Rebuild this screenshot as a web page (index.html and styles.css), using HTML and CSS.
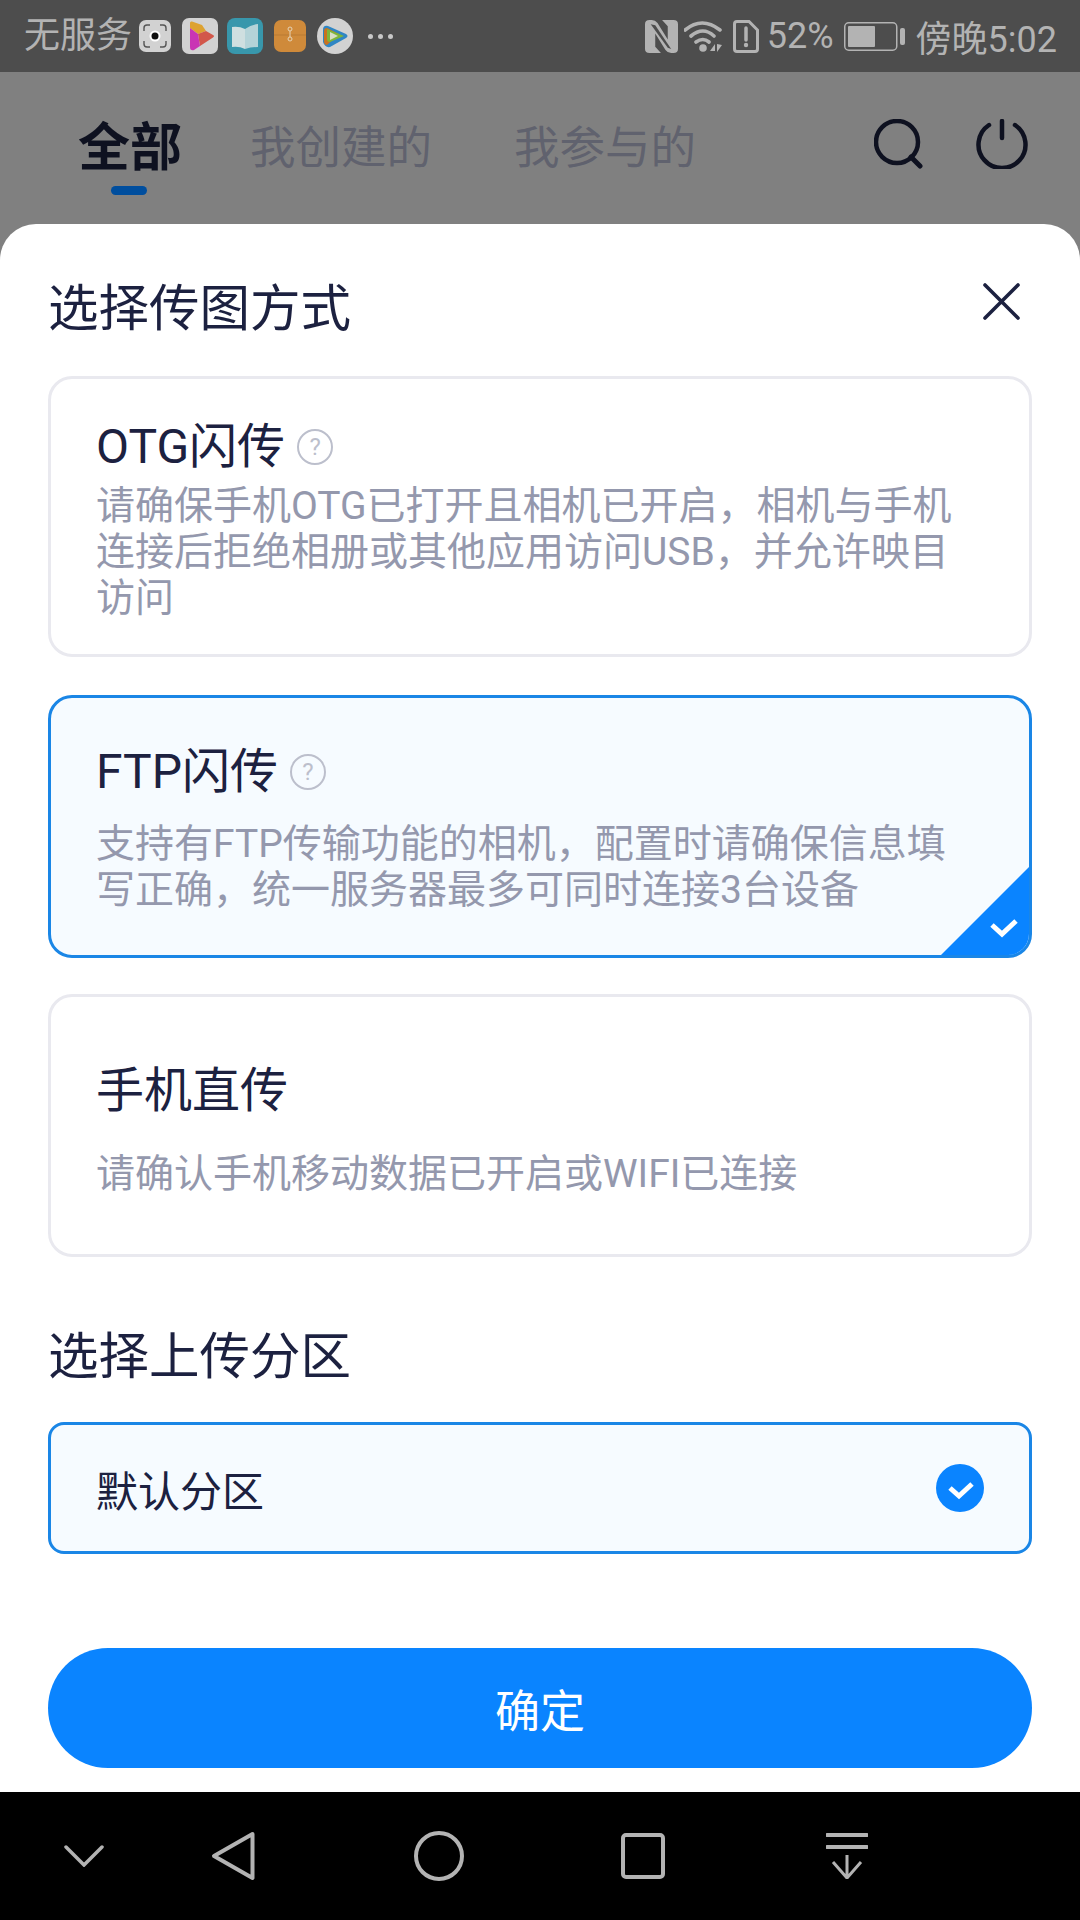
FILE: index.html
```html
<!DOCTYPE html>
<html lang="zh">
<head>
    <meta charset="UTF-8" />
    <title>选择传图方式</title>
    <meta name="viewport" content="width=device-width, initial-scale=1" />
    <link rel="stylesheet" href="styles.css">
</head>
<body>
    <div class="status">
        <div class="status-left">
            <span class="carrier">无服务</span>
            <svg class="ico-shot" width="32" height="32" viewBox="0 0 32 32">
                <rect width="32" height="32" rx="7" fill="#d2d2d2"/>
                <path d="M5 11V8q0-3 3-3h3M21 5h3q3 0 3 3v3M27 21v3q0 3-3 3h-3M11 27H8q-3 0-3-3v-3" fill="none" stroke="#555" stroke-width="1.4"/>
                <circle cx="16" cy="16" r="5.5" fill="#fff"/>
                <circle cx="16" cy="16" r="3.5" fill="#111"/>
            </svg>
            <svg class="ico-play" width="36" height="36" viewBox="0 0 36 36">
                <rect width="36" height="36" rx="7" fill="#d2d2d2"/>
                <path d="M8 5q0-2 2-1.500L20 7l4 6-8 3-8-6z" fill="#dda231"/>
                <path d="M16 16l8-3 7 4q2 1 0 2.500L18 28z" fill="#d2574a"/>
                <path d="M8 10l8 6 2 12-6 4q-4 1-4-3z" fill="#c935b4"/>
            </svg>
            <svg class="ico-book" width="36" height="36" viewBox="0 0 36 36">
                <rect width="36" height="36" rx="8" fill="#3897ac"/>
                <path d="M5 9q7-1 13 2v20q-6-3-13-2z" fill="#cfdfe0"/>
                <path d="M18 11q6-4 13-5v23q-7 0-13 2z" fill="#b4d3d8"/>
            </svg>
            <svg class="ico-zip" width="32" height="32" viewBox="0 0 32 32">
                <rect width="32" height="32" rx="7" fill="#cf8a3a"/>
                <path d="M0 15h32" stroke="#b97a32" stroke-width="1"/>
                <circle cx="16" cy="9" r="2" fill="none" stroke="#e6d2b4" stroke-width="1"/>
                <circle cx="16" cy="19" r="2" fill="none" stroke="#e6d2b4" stroke-width="1"/>
                <path d="M16 11v6" stroke="#e6d2b4" stroke-width="1"/>
            </svg>
            <svg class="ico-video" width="36" height="36" viewBox="0 0 36 36">
                <circle cx="18" cy="18" r="18" fill="#d2d2d2"/>
                <path d="M6 12q0-5 5-4l18 8q3 2 0 4L13 29q-5 1-7-5z" fill="#2f86c4"/>
                <path d="M7 13q0-3 3-3l12 6-12 11q-3 0-3-4z" fill="#c9711f"/>
                <path d="M10 11l17 7-14 6q-3 0-3-3z" fill="#7eb53a"/>
                <path d="M13 14l8 4-8 4z" fill="#d8dfc4"/>
            </svg>
            <span class="dots"><i></i><i></i><i></i></span>
        </div>
        <div class="status-right">
            <svg width="33" height="33" viewBox="0 0 29 32" preserveAspectRatio="none">
                <path d="M0 4q0-4 4-4h2q3 0 5 3l9 16V6l-5-6h10q4 0 4 4v24q0 4-4 4h-2q-3 0-5-3L9 13v13l5 6H4q-4 0-4-4z" fill="#b3b3b3"/>
                <path d="M5 4l4 1 14 23-3-1z" fill="#4d4d4d"/>
            </svg>
            <svg class="ico-wifi" width="39" height="34" viewBox="0 0 39 34">
                <path d="M1 11q17-14 35 0M7 17q12-10 23 0M12 23q7-5 13 0" fill="none" stroke="#b3b3b3" stroke-width="3.600" stroke-linecap="round"/>
                <circle cx="19" cy="29" r="3.800" fill="#b3b3b3"/>
                <path d="M26 32l5-7v7zM33 25l5 1-5 7z" fill="#b3b3b3"/>
            </svg>
            <svg class="ico-sim" width="26" height="33" viewBox="0 0 26 33">
                <path d="M4 1.500h12l8.500 8.500v19q0 2.500-2.500 2.500H4q-2.500 0-2.500-2.500V4q0-2.500 2.500-2.500z" fill="none" stroke="#b3b3b3" stroke-width="3"/>
                <path d="M13 8v12" stroke="#b3b3b3" stroke-width="3.500" stroke-linecap="round"/>
                <circle cx="13" cy="25" r="2.200" fill="#b3b3b3"/>
            </svg>
            <span class="battery-pct">52%</span>
            <svg class="ico-battery" width="61" height="29" viewBox="0 0 61 29">
                <rect x="0.750" y="0.750" width="52" height="27.500" rx="4" fill="none" stroke="#b3b3b3" stroke-width="1.500"/>
                <rect x="4" y="4" width="27" height="21" rx="1" fill="#b3b3b3"/>
                <rect x="56" y="6" width="5" height="17" rx="2" fill="#b3b3b3"/>
            </svg>
            <span class="clock">傍晚5:02</span>
        </div>
    </div>

    <div class="tabs">
        <div class="tab tab-active">全部</div>
        <div class="tab">我创建的</div>
        <div class="tab">我参与的</div>
        <svg class="ico-search" width="50" height="50" viewBox="0 0 50 50">
            <circle cx="23" cy="23" r="21" fill="none" stroke="#0e1120" stroke-width="4.500"/>
            <path d="M37 38l9 9" stroke="#0e1120" stroke-width="5" stroke-linecap="round"/>
        </svg>
        <svg class="ico-power" width="52" height="50" viewBox="0 0 52 50">
            <path d="M13 6a23.500 23.500 0 1 0 26 0" fill="none" stroke="#0e1120" stroke-width="4.500" stroke-linecap="round"/>
            <path d="M26 2v17" stroke="#0e1120" stroke-width="4.500" stroke-linecap="round"/>
        </svg>
    </div>

    <div class="sheet">
        <div class="sheet-head">
            <h2>选择传图方式</h2>
            <svg class="ico-close" width="37" height="37" viewBox="0 0 37 37">
                <path d="M2 2l33 33M35 2L2 35" stroke="#1c2140" stroke-width="3.600" stroke-linecap="round"/>
            </svg>
        </div>

        <div class="option">
            <div class="option-title">OTG闪传 <span class="help">?</span></div>
            <p>请确保手机OTG已打开且相机已开启，相机与手机<br>连接后拒绝相册或其他应用访问USB，并允许映目<br>访问</p>
        </div>

        <div class="option option-selected">
            <div class="option-title">FTP闪传 <span class="help">?</span></div>
            <p>支持有FTP传输功能的相机，配置时请确保信息填<br>写正确，统一服务器最多可同时连接3台设备</p>
            <svg class="corner" width="88" height="88" viewBox="0 0 88 88">
                <path d="M88 0V88H0z" fill="#0a84ff"/>
                <path d="M51 58l10 9 14-13" fill="none" stroke="#fff" stroke-width="5"/>
            </svg>
        </div>

        <div class="option option-plain">
            <div class="option-title">手机直传</div>
            <p>请确认手机移动数据已开启或WIFI已连接</p>
        </div>

        <h2 class="section-title">选择上传分区</h2>

        <div class="partition">
            <span>默认分区</span>
            <svg width="48" height="48" viewBox="0 0 48 48">
                <circle cx="24" cy="24" r="24" fill="#0a84ff"/>
                <path d="M14 24l9 8 13-12" fill="none" stroke="#fff" stroke-width="5"/>
            </svg>
        </div>

        <button class="confirm">确定</button>
    </div>

    <div class="nav">
        <svg class="nav-down" width="40" height="22" viewBox="0 0 40 22">
            <path d="M2 2l18 18L38 2" fill="none" stroke="#b3b3b3" stroke-width="3.500" stroke-linecap="round"/>
        </svg>
        <svg class="nav-back" width="44" height="50" viewBox="0 0 44 50">
            <path d="M41.500 3L3 25l38.500 22z" fill="none" stroke="#b3b3b3" stroke-width="4" stroke-linejoin="round"/>
        </svg>
        <svg class="nav-home" width="50" height="50" viewBox="0 0 50 50">
            <circle cx="25" cy="25" r="23" fill="none" stroke="#b3b3b3" stroke-width="4"/>
        </svg>
        <svg class="nav-recent" width="44" height="46" viewBox="0 0 44 46">
            <rect x="2" y="2" width="40" height="42" rx="3" fill="none" stroke="#b3b3b3" stroke-width="4"/>
        </svg>
        <svg class="nav-pull" width="42" height="46" viewBox="0 0 42 46">
            <path d="M1 2h40M1 14h40" stroke="#b3b3b3" stroke-width="4" stroke-linecap="round"/>
            <path d="M21 22v22M7 29l14 16 14-16" fill="none" stroke="#b3b3b3" stroke-width="3"/>
        </svg>
    </div>
</body>
</html>
```

FILE: styles.css
```css
body {
    font-family: Roboto, "Noto Sans CJK SC", sans-serif;
    margin: 0;
    padding: 0;
    width: 1080px;
    height: 1920px;
    overflow: hidden;
    display: flex;
    flex-direction: column;
    background: #808080;
}
svg {
    display: block;
    flex: none;
}

/* status bar */
.status {
    height: 72px;
    flex: none;
    background: #4d4d4d;
    color: #b3b3b3;
    display: flex;
    justify-content: space-between;
    align-items: center;
    padding: 0 23px 0 24px;
}
.status-left, .status-right {
    display: flex;
    align-items: center;
}
.carrier {
    font-size: 36px;
    line-height: 72px;
    width: 115px;
}
.ico-play { margin-left: 11px; }
.ico-book { margin-left: 9px; }
.ico-zip { margin-left: 11px; }
.ico-video { margin-left: 11px; }
.dots {
    display: flex;
    gap: 5px;
    margin-left: 15px;
}
.dots i {
    width: 5px;
    height: 5px;
    border-radius: 50%;
    background: #c8c8c8;
}
.ico-wifi { margin-left: 6px; }
.ico-sim { margin-left: 10px; }
.battery-pct {
    font-size: 36px;
    margin-left: 8px;
}
.ico-battery { margin-left: 10px; }
.clock {
    font-size: 36px;
    margin-left: 11px;
}

/* tabs behind the sheet */
.tabs {
    height: 152px;
    flex: none;
    display: flex;
    align-items: flex-start;
    padding: 45px 52px 0 78px;
    box-sizing: border-box;
}
.tab {
    font-size: 45.500px;
    line-height: 64px;
    color: #60626e;
    margin-right: 82px;
}
.tab-active {
    font-size: 52px;
    font-weight: 700;
    color: #0e1120;
    margin-right: 68px;
    position: relative;
}
.tab-active::after {
    content: "";
    position: absolute;
    left: 33px;
    top: 69px;
    width: 36px;
    height: 9px;
    border-radius: 5px;
    background: #004e9e;
}
.ico-search {
    margin: 2px 0 0 auto;
}
.ico-power {
    margin: 2px 0 0 52px;
}

/* bottom sheet */
.sheet {
    flex: 1;
    min-height: 0;
    background: #fff;
    border-radius: 36px 36px 0 0;
    padding: 0 48px;
    display: flex;
    flex-direction: column;
}
.sheet-head {
    display: flex;
    justify-content: space-between;
    align-items: flex-start;
    height: 152px;
}
h2 {
    font-size: 50.500px;
    font-weight: 400;
    line-height: 70px;
    color: #1c2140;
    margin: 0;
}
.sheet-head h2 {
    margin-top: 50px;
}
.ico-close {
    margin: 59px 12px 0 0;
}
.option {
    border: 3px solid #e9e9ef;
    border-radius: 24px;
    padding: 36px 45px 0;
    height: 281px;
    box-sizing: border-box;
    margin-bottom: 38px;
    position: relative;
    overflow: hidden;
}
.option-selected {
    border-color: #1a86e6;
    background: #f6fbff;
    height: 263px;
    margin-bottom: 36px;
    padding-top: 42px;
}
.option-plain {
    border-color: #e9e9ef;
    height: 263px;
    margin-bottom: 0;
    padding-top: 62px;
}
.option-title {
    font-size: 48px;
    line-height: 64px;
    color: #1c2140;
    display: flex;
    align-items: center;
    gap: 12px;
}
.help {
    width: 36px;
    height: 36px;
    box-sizing: border-box;
    border: 2px solid #bcbfcc;
    border-radius: 50%;
    font-size: 24px;
    line-height: 32px;
    text-align: center;
    color: #bcbfcc;
}
.option p {
    font-size: 39px;
    line-height: 46px;
    color: #9498ad;
    margin: 4px 0 0;
}
.option-selected p {
    margin-top: 17px;
}
.option-plain p {
    margin-top: 28px;
}
.corner {
    position: absolute;
    right: 0;
    bottom: 0;
}
.section-title {
    margin-top: 65px;
}
.partition {
    margin-top: 30px;
    height: 132px;
    flex: none;
    box-sizing: border-box;
    border: 3px solid #1a86e6;
    border-radius: 16px;
    background: #f6fbff;
    padding: 0 45px;
    display: flex;
    justify-content: space-between;
    align-items: center;
    font-size: 42px;
    color: #1c2140;
}
.confirm {
    margin-top: 94px;
    height: 120px;
    flex: none;
    border: none;
    border-radius: 60px;
    background: #0a84ff;
    color: #fff;
    font-family: inherit;
    font-size: 45px;
}

/* navigation bar */
.nav {
    height: 128px;
    flex: none;
    background: #000;
    display: flex;
    align-items: center;
}
.nav-down { margin-left: 64px; }
.nav-back { margin-left: 107px; }
.nav-home { margin-left: 159px; }
.nav-recent { margin-left: 157px; }
.nav-pull { margin-left: 161px; }
```
